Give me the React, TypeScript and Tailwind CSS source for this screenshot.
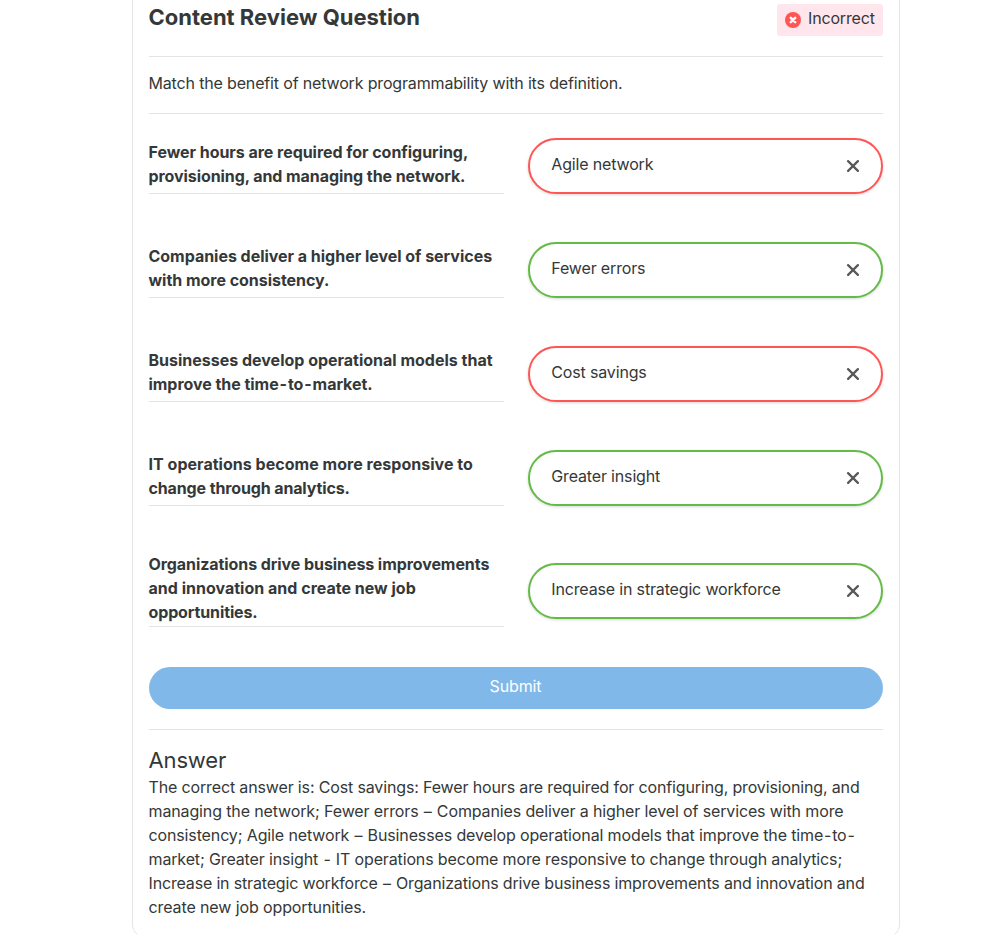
import { Fragment } from "react";

type Line = { text: string; tracking: string };
type Match = { lines: Line[]; answer: string; correct: boolean };

const matches: Match[] = [
  {
    lines: [
      { text: "Fewer hours are required for configuring,", tracking: "tracking-[-0.04px]" },
      { text: "provisioning, and managing the network.", tracking: "tracking-[-0.075px]" },
    ],
    answer: "Agile network",
    correct: false,
  },
  {
    lines: [
      { text: "Companies deliver a higher level of services", tracking: "tracking-[-0.025px]" },
      { text: "with more consistency.", tracking: "tracking-[-0.03px]" },
    ],
    answer: "Fewer errors",
    correct: true,
  },
  {
    lines: [
      { text: "Businesses develop operational models that", tracking: "tracking-[-0.005px]" },
      { text: "improve the time-to-market.", tracking: "tracking-[-0.04px]" },
    ],
    answer: "Cost savings",
    correct: false,
  },
  {
    lines: [
      { text: "IT operations become more responsive to", tracking: "tracking-[0.03px]" },
      { text: "change through analytics.", tracking: "tracking-[-0.13px]" },
    ],
    answer: "Greater insight",
    correct: true,
  },
  {
    lines: [
      { text: "Organizations drive business improvements", tracking: "tracking-[-0.075px]" },
      { text: "and innovation and create new job", tracking: "tracking-[0.01px]" },
      { text: "opportunities.", tracking: "tracking-[-0.12px]" },
    ],
    answer: "Increase in strategic workforce",
    correct: true,
  },
];

const answerLines: Line[] = [
  {
    text: "The correct answer is: Cost savings: Fewer hours are required for configuring, provisioning, and",
    tracking: "tracking-[-0.145px]",
  },
  {
    text: "managing the network; Fewer errors – Companies deliver a higher level of services with more",
    tracking: "tracking-[-0.13px]",
  },
  {
    text: "consistency; Agile network – Businesses develop operational models that improve the time-to-",
    tracking: "tracking-[-0.13px]",
  },
  {
    text: "market; Greater insight - IT operations become more responsive to change through analytics;",
    tracking: "tracking-[-0.14px]",
  },
  {
    text: "Increase in strategic workforce – Organizations drive business improvements and innovation and",
    tracking: "tracking-[-0.165px]",
  },
  { text: "create new job opportunities.", tracking: "tracking-[-0.11px]" },
];

/** One unbroken line of copy; dashes get a little extra air on both sides. */
function TextLine({ line }: { line: Line }) {
  return (
    <span className={`block whitespace-nowrap ${line.tracking}`}>
      {line.text.split(/([–-])/).map((part, i) =>
        part === "–" || part === "-" ? (
          <span key={i} className="mx-[0.9px]">
            {part}
          </span>
        ) : (
          <Fragment key={i}>{part}</Fragment>
        ),
      )}
    </span>
  );
}

function ErrorIcon() {
  return (
    <svg viewBox="0 0 16 16" className="size-4 shrink-0">
      <circle cx="8" cy="8" r="8" fill="#ff5654" />
      <path d="M5.8 5.8l4.4 4.4M10.2 5.8l-4.4 4.4" stroke="#fff" strokeWidth="2.5" strokeLinecap="round" />
    </svg>
  );
}

function CloseIcon() {
  return (
    <svg viewBox="0 0 12 12" className="size-3 shrink-0">
      <path
        d="M1.1 1.1l9.8 9.8M10.9 1.1L1.1 10.9"
        stroke="#58585b"
        strokeWidth="2.2"
        strokeLinecap="round"
      />
    </svg>
  );
}

function MatchRow({ match }: { match: Match }) {
  return (
    <div className="grid grid-cols-2 items-center gap-6">
      <div className="flex min-h-14 flex-col justify-center border-b border-[#e4e4e4] font-bold">
        <div className="-translate-y-[2px] -indent-[0.5px]">
          {match.lines.map((line) => (
            <TextLine key={line.text} line={line} />
          ))}
        </div>
      </div>
      <div
        className={`flex h-14 items-center justify-between rounded-full border-2 bg-white pr-[22px] pl-[21.3px] shadow-[0_1px_3px_rgba(0,0,0,0.16)] ${
          match.correct ? "border-[#64bb46]" : "border-[#ff5654]"
        }`}
      >
        <span className="pb-1 tracking-[-0.16px]">{match.answer}</span>
        <CloseIcon />
      </div>
    </div>
  );
}

export default function App() {
  return (
    <div className="h-[934px] overflow-hidden bg-white pl-[132px] font-['Inter',sans-serif] text-base leading-6 text-[#343838]">
      <main className="-mt-4 h-[953px] w-[768px] rounded-xl border border-[#e4e4e4] px-4 pt-[19px]">
        <header className="flex h-[53px] items-start justify-between border-b border-[#e4e4e4]">
          <h1 className="-mt-px -indent-[0.5px] text-[22px] leading-7 font-bold">Content Review Question</h1>
          <div className="flex h-8 w-[106px] items-center gap-[7px] rounded-[3px] bg-[#ffe6ed] pl-2">
            <ErrorIcon />
            <span className="pb-1 tracking-[-0.16px]">Incorrect</span>
          </div>
        </header>
        <p className="h-[57px] border-b border-[#e4e4e4] pt-[14px] -indent-[0.5px] tracking-[-0.16px]">
          Match the benefit of network programmability with its definition.
        </p>
        <div className="flex flex-col gap-12 pt-6">
          {matches.map((match) => (
            <MatchRow key={match.answer} match={match} />
          ))}
        </div>
        <button className="mt-10 block h-[42px] w-full rounded-full bg-[#80b8ea] pr-px pb-1 tracking-[-0.12px] text-white">
          Submit
        </button>
        <section className="mt-5 border-t border-[#e4e4e4] pt-4 -indent-[0.5px]">
          <h2 className="mb-px text-[22px] leading-7 tracking-[-0.15px]">Answer</h2>
          <p>
            {answerLines.map((line) => (
              <TextLine key={line.text} line={line} />
            ))}
          </p>
        </section>
      </main>
    </div>
  );
}
